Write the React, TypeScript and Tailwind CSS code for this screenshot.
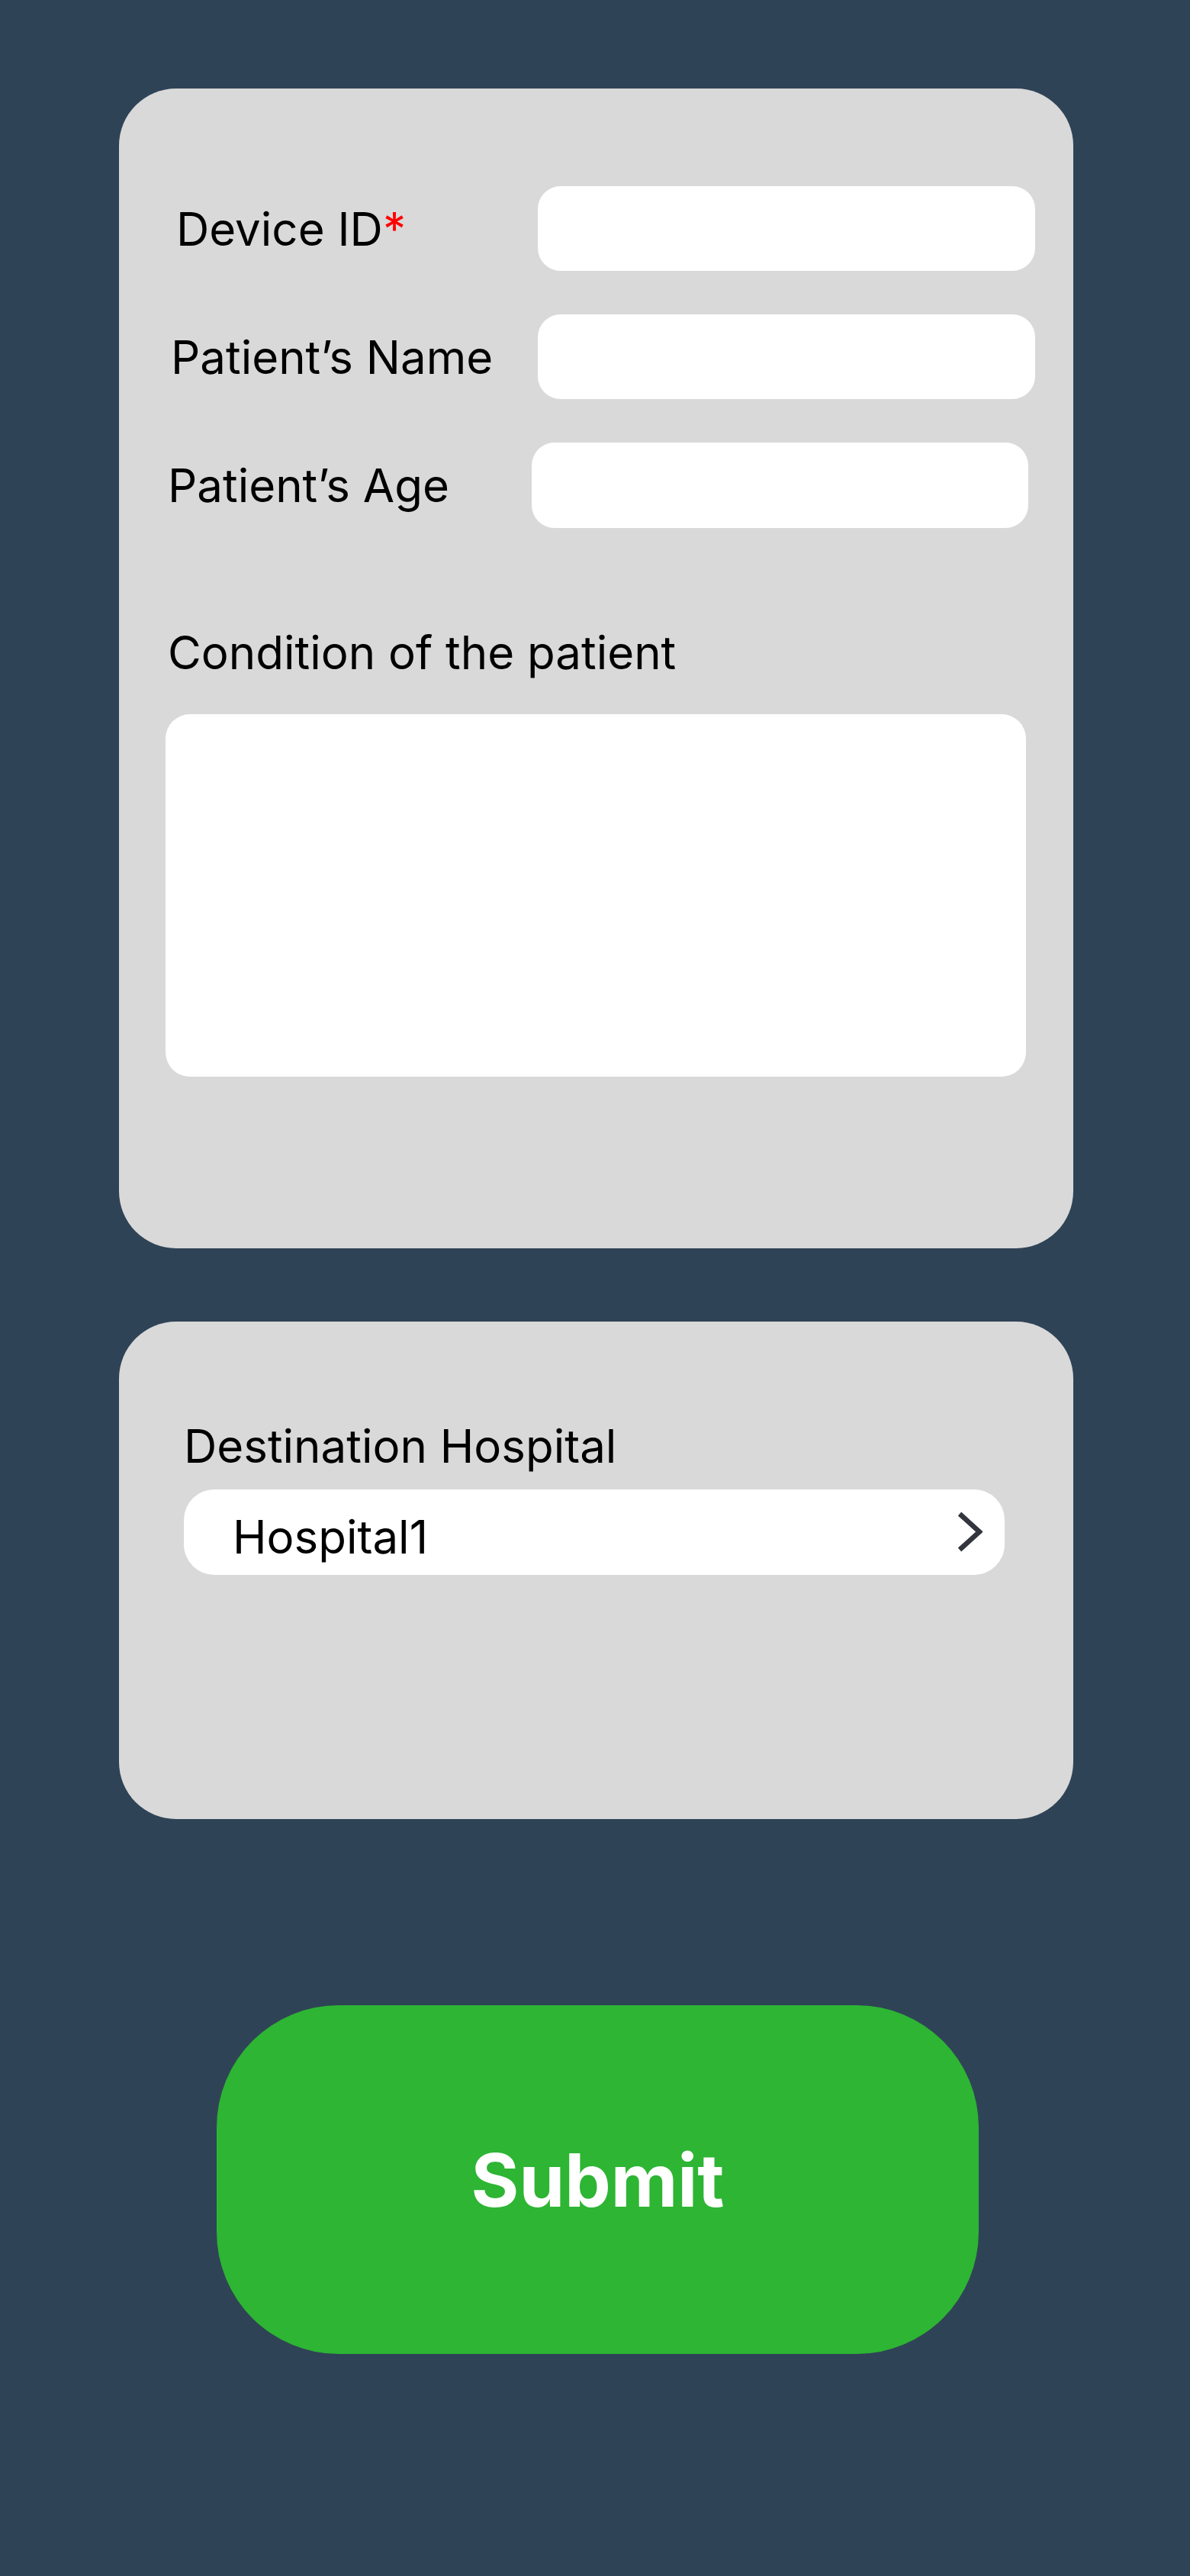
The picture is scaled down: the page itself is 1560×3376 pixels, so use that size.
import React from 'react';

const Chevron: React.FC = () => (
  <svg width="33" height="54" viewBox="0 0 33 54" fill="none">
    <polyline points="3,3 29,26.5 3,50" stroke="#33363f" strokeWidth="6.5" strokeLinejoin="miter" />
  </svg>
);

const App: React.FC = () => {
  return (
    <div
      className="h-[3376px] w-full overflow-hidden bg-[#2f4356] pt-[116px] text-black"
      style={{ fontFamily: 'Inter, "Noto Sans", sans-serif' }}
    >
      {/* patient details */}
      <div className="ml-[156px] w-[1251px] h-[1520px] rounded-[75px] bg-[#d9d9d9] pt-[128px]">
        <div className="flex items-center h-[111px] pl-[75px]">
          <label className="w-[474px] text-[60px] leading-none">
            Device ID<span className="text-[#ff0000]">*</span>
          </label>
          <div className="w-[652px] h-[111px] rounded-[30px] bg-white" />
        </div>
        <div className="flex items-center h-[111px] pl-[68px] mt-[57px]">
          <label className="w-[481px] text-[60px] leading-none">Patient’s Name</label>
          <div className="w-[652px] h-[111px] rounded-[30px] bg-white" />
        </div>
        <div className="flex items-center h-[112px] pl-[64px] mt-[57px]">
          <label className="w-[477px] text-[60px] leading-none">Patient’s Age</label>
          <div className="w-[651px] h-[112px] rounded-[30px] bg-white" />
        </div>

        <p className="mt-[133px] pl-[64px] text-[60px] leading-none">Condition of the patient</p>
        <div className="mt-[51px] ml-[61px] w-[1128px] h-[475px] rounded-[32px] bg-white" />
      </div>

      {/* destination */}
      <div className="mt-[96px] ml-[156px] w-[1251px] h-[652px] rounded-[75px] bg-[#d9d9d9] pt-[133px]">
        <p className="pl-[85px] text-[60px] leading-none">Destination Hospital</p>
        <div className="mt-[27px] ml-[85px] w-[1076px] h-[112px] rounded-[40px] bg-white flex items-center justify-between pl-[64px] pr-[29px]">
          <span className="text-[60px] leading-none pt-[11px]">Hospital1</span>
          <Chevron />
        </div>
      </div>

      <button className="block mt-[244px] ml-[284px] w-[999px] h-[457px] rounded-[160px] bg-[#2db533] text-white text-[96px] font-bold leading-none">
        Submit
      </button>
    </div>
  );
};

export default App;
